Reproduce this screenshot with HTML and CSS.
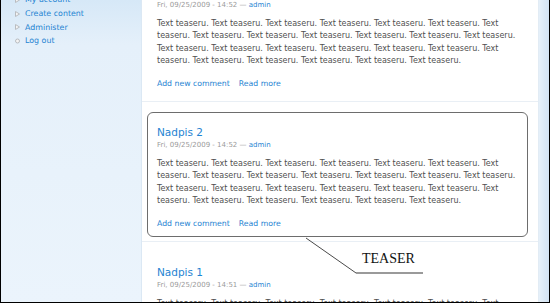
FILE: index.html
```html
<!DOCTYPE html>
<html lang="en">
<head>
<meta charset="UTF-8">
<meta name="viewport" content="width=device-width, initial-scale=1.0">
<title>Teaser</title>
<link rel="stylesheet" href="styles.css">
</head>
<body>
<div class="page">
    <aside class="sidebar">
        <ul class="menu">
            <li class="collapsed"><svg class="bullet" width="5" height="6" viewBox="0 0 5 6"><path d="M0.5 0.5 L4.5 3 L0.5 5.5 Z" fill="#f4f4f4" stroke="#b9bcc0" stroke-width="1"/></svg><a href="#">My account</a></li>
            <li class="collapsed"><svg class="bullet" width="5" height="6" viewBox="0 0 5 6"><path d="M0.5 0.5 L4.5 3 L0.5 5.5 Z" fill="#f4f4f4" stroke="#b9bcc0" stroke-width="1"/></svg><a href="#">Create content</a></li>
            <li class="collapsed"><svg class="bullet" width="5" height="6" viewBox="0 0 5 6"><path d="M0.5 0.5 L4.5 3 L0.5 5.5 Z" fill="#f4f4f4" stroke="#b9bcc0" stroke-width="1"/></svg><a href="#">Administer</a></li>
            <li class="leaf"><svg class="bullet" width="5" height="6" viewBox="0 0 5 6"><circle cx="2.5" cy="3" r="2" fill="#f4f4f4" stroke="#b9bcc0" stroke-width="1"/></svg><a href="#">Log out</a></li>
        </ul>
    </aside>
    <main class="content">
        <div class="node first">
            <h2 class="node-title"><a href="#">Nadpis 3</a></h2>
            <div class="submitted">Fri, 09/25/2009 - 14:52 — <a href="#">admin</a></div>
            <p class="node-text">Text teaseru. Text teaseru. Text teaseru. Text teaseru. Text teaseru. Text teaseru. Text teaseru. Text teaseru. Text teaseru. Text teaseru. Text teaseru. Text teaseru. Text teaseru. Text teaseru. Text teaseru. Text teaseru. Text teaseru. Text teaseru. Text teaseru. Text teaseru. Text teaseru. Text teaseru. Text teaseru. Text teaseru. Text teaseru.</p>
            <div class="links"><a href="#">Add new comment</a><a href="#">Read more</a></div>
        </div>
        <div class="node teaser">
            <h2 class="node-title"><a href="#">Nadpis 2</a></h2>
            <div class="submitted">Fri, 09/25/2009 - 14:52 — <a href="#">admin</a></div>
            <p class="node-text">Text teaseru. Text teaseru. Text teaseru. Text teaseru. Text teaseru. Text teaseru. Text teaseru. Text teaseru. Text teaseru. Text teaseru. Text teaseru. Text teaseru. Text teaseru. Text teaseru. Text teaseru. Text teaseru. Text teaseru. Text teaseru. Text teaseru. Text teaseru. Text teaseru. Text teaseru. Text teaseru. Text teaseru. Text teaseru.</p>
            <div class="links"><a href="#">Add new comment</a><a href="#">Read more</a></div>
            <div class="callout">
                <svg class="callout-lines" width="300" height="200" viewBox="0 0 300 200">
                    <line x1="164" y1="136" x2="214" y2="171" stroke="#4a4a4a" stroke-width="1"/>
                    <line x1="214" y1="171" x2="281" y2="171" stroke="#9a9a9a" stroke-width="2"/>
                </svg>
                <span class="callout-label">TEASER</span>
            </div>
        </div>
        <div class="node">
            <h2 class="node-title"><a href="#">Nadpis 1</a></h2>
            <div class="submitted">Fri, 09/25/2009 - 14:51 — <a href="#">admin</a></div>
            <p class="node-text">Text teaseru. Text teaseru. Text teaseru. Text teaseru. Text teaseru. Text teaseru. Text teaseru. Text teaseru. Text teaseru. Text teaseru. Text teaseru. Text teaseru. Text teaseru. Text teaseru. Text teaseru. Text teaseru. Text teaseru. Text teaseru. Text teaseru. Text teaseru. Text teaseru. Text teaseru. Text teaseru. Text teaseru. Text teaseru.</p>
            <div class="links"><a href="#">Add new comment</a><a href="#">Read more</a></div>
        </div>
    </main>
    <div class="rail"></div>
</div>
</body>
</html>
```

FILE: styles.css
```css
body {
    margin: 0;
    font-family: "DejaVu Sans", Verdana, sans-serif;
    background-color: #ffffff;
    overflow: hidden;
}
a {
    color: #1f84d2;
    text-decoration: none;
}
.page {
    display: flex;
    width: 550px;
    height: 303px;
    box-sizing: border-box;
    border-left: 1px solid #000000;
    border-right: 1px solid #000000;
    border-bottom: 1px solid #000000;
    overflow: hidden;
}
.sidebar {
    width: 140px;
    flex-shrink: 0;
    background: linear-gradient(#d6e8f7 0, #e5f0fa 45px, #ebf4fc 100%);
}
.menu {
    list-style: none;
    margin: -7px 0 0 0;
    padding: 0 0 0 14px;
}
.menu li {
    display: flex;
    align-items: center;
    height: 13.7px;
    font-size: 7.9px;
}
.menu .bullet {
    margin-right: 5px;
    flex-shrink: 0;
}
.content {
    width: 396px;
    flex-shrink: 0;
    background-color: #ffffff;
    border-left: 1px solid #dbe8f4;
}
.node {
    position: relative;
    border-top: 1px solid #e9eff5;
    padding: 23px 11px 11px 15px;
}
.node.first {
    margin-top: -39px;
}
.node-title {
    margin: 0;
    font-size: 10.5px;
    line-height: 14px;
    font-weight: normal;
}
.submitted {
    margin-top: 1px;
    font-size: 7px;
    line-height: 11px;
    color: #9a9a9a;
}
.node-text {
    margin: 7px 0 0 0;
    font-size: 8px;
    line-height: 12.3px;
    color: #505050;
}
.links {
    display: flex;
    gap: 9px;
    margin-top: 10.5px;
    font-size: 7.75px;
    line-height: 12.3px;
}
.node.teaser::before {
    content: "";
    position: absolute;
    top: 10px;
    left: 5px;
    right: 10px;
    bottom: 3.5px;
    border: 1.5px solid #6d6d6d;
    border-radius: 6px;
    pointer-events: none;
}
.callout {
    position: absolute;
    top: 0;
    left: 0;
    width: 300px;
    height: 200px;
    z-index: 2;
    pointer-events: none;
}
.callout-lines {
    display: block;
}
.callout-label {
    position: absolute;
    left: 220px;
    top: 150px;
    font-family: "Liberation Serif", "Times New Roman", serif;
    font-size: 14px;
    line-height: 1;
    color: #111111;
}
.rail {
    flex: 1;
    background: linear-gradient(to right, #e6f0f9, #d2e3f3);
    border-left: 1px solid #e2ecf5;
}
```
